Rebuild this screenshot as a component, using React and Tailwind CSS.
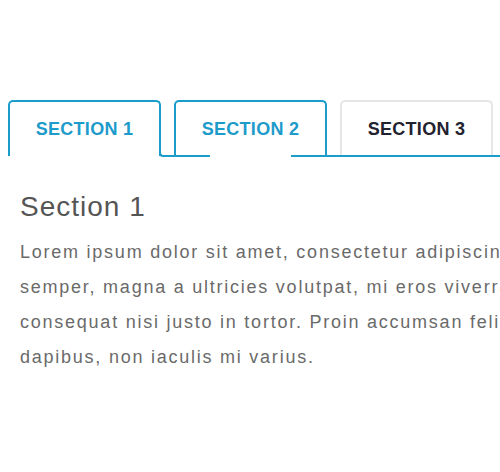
export default function App() {
  const blue = "border-[#1b9dcc]";
  return (
    <div
      className="w-[500px] h-[472px] overflow-hidden bg-white"
      style={{ fontFamily: '"Liberation Sans", Arial, sans-serif' }}
    >
      <div className="pt-[100px] pl-2">
        <div className="flex gap-[13px]">
          <div className={`w-[153px] h-[56px] border-2 border-b-0 ${blue} rounded-t-[5px] flex items-center justify-center text-[18px] font-bold tracking-[0.3px] text-[#1d9bcb]`}>
            SECTION 1
          </div>
          <div className={`w-[153px] h-[56px] border-2 border-b-0 ${blue} rounded-t-[5px] flex items-center justify-center text-[18px] font-bold tracking-[0.3px] text-[#1d9bcb]`}>
            SECTION 2
          </div>
          <div className="w-[153px] h-[56px] border-2 border-b-0 border-[#e6e6e6] rounded-t-[5px] flex items-center justify-center text-[18px] font-bold tracking-[0.3px] text-[#22222e]">
            SECTION 3
          </div>
        </div>
        <div className="flex items-end -mt-[6px] h-[7px]">
          <div className={`ml-[151px] w-[51px] h-[7px] border-l-2 border-b-2 ${blue} rounded-bl-[4px]`} />
          <div className="w-[81px]" />
          <div className="flex-1 h-[2px] bg-[#1b9dcc]" />
        </div>
      </div>
      <div className="pl-5 pt-[34px]">
        <h2 className="text-[28px] leading-[32px] tracking-[1px] text-[#555555] font-normal">
          Section 1
        </h2>
        <div className="mt-[12px] text-[18px] leading-[35px] tracking-[1.76px] text-[#6a6a6a] whitespace-nowrap overflow-hidden">
          <div>Lorem ipsum dolor sit amet, consectetur adipiscing elit. Aenean</div>
          <div>semper, magna a ultricies volutpat, mi eros viverra massa, vitae</div>
          <div>consequat nisi justo in tortor. Proin accumsan felis ac felis</div>
          <div>dapibus, non iaculis mi varius.</div>
        </div>
      </div>
    </div>
  );
}
